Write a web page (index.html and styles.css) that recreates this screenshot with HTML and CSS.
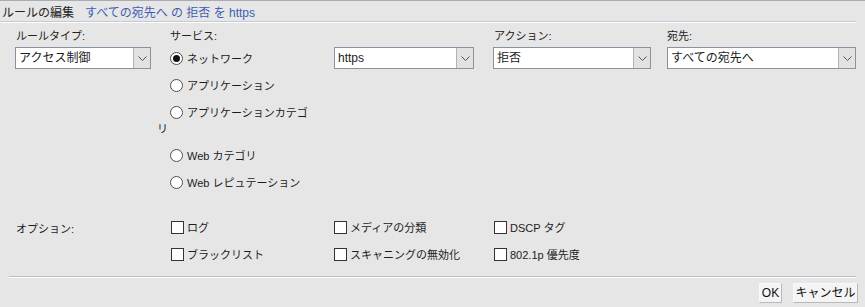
FILE: index.html
```html
<!DOCTYPE html>
<html lang="ja">
<head>
<meta charset="utf-8">
<title>ルールの編集</title>
<link rel="stylesheet" href="styles.css">
</head>
<body>
<div class="dialog">
  <div class="header">
    <span class="title">ルールの編集</span>
    <a class="summary">すべての宛先へ の 拒否 を https</a>
  </div>
  <div class="form">
    <div class="grid">
      <div class="lbl c1">ルールタイプ:</div>
      <div class="lbl c2">サービス:</div>
      <div class="lbl c3"></div>
      <div class="lbl c4">アクション:</div>
      <div class="lbl c5">宛先:</div>

      <div class="cell">
        <div class="select w1"><span class="val">アクセス制御</span><span class="btn"><svg width="9" height="5" viewBox="0 0 9 5"><polyline points="0.5,0.5 4.5,4.5 8.5,0.5" fill="none" stroke="#555" stroke-width="1"/></svg></span></div>
      </div>
      <div class="cell radios">
        <div class="item"><span class="radio checked"></span>ネットワーク</div>
        <div class="item"><span class="radio"></span>アプリケーション</div>
        <div class="item"><span class="radio"></span>アプリケーションカテゴリ</div>
        <div class="item"><span class="radio"></span>Web カテゴリ</div>
        <div class="item"><span class="radio"></span>Web レピュテーション</div>
      </div>
      <div class="cell">
        <div class="select w3"><span class="val">https</span><span class="btn"><svg width="9" height="5" viewBox="0 0 9 5"><polyline points="0.5,0.5 4.5,4.5 8.5,0.5" fill="none" stroke="#555" stroke-width="1"/></svg></span></div>
      </div>
      <div class="cell">
        <div class="select w4"><span class="val">拒否</span><span class="btn"><svg width="9" height="5" viewBox="0 0 9 5"><polyline points="0.5,0.5 4.5,4.5 8.5,0.5" fill="none" stroke="#555" stroke-width="1"/></svg></span></div>
      </div>
      <div class="cell">
        <div class="select w5"><span class="val">すべての宛先へ</span><span class="btn"><svg width="9" height="5" viewBox="0 0 9 5"><polyline points="0.5,0.5 4.5,4.5 8.5,0.5" fill="none" stroke="#555" stroke-width="1"/></svg></span></div>
      </div>
    </div>

    <div class="grid options">
      <div class="optlbl">オプション:</div>
      <div class="checks c2">
        <div class="item"><span class="check"></span>ログ</div>
        <div class="item"><span class="check"></span>ブラックリスト</div>
      </div>
      <div class="checks c3">
        <div class="item"><span class="check"></span>メディアの分類</div>
        <div class="item"><span class="check"></span>スキャニングの無効化</div>
      </div>
      <div class="checks c4">
        <div class="item"><span class="check"></span>DSCP タグ</div>
        <div class="item"><span class="check"></span>802.1p 優先度</div>
      </div>
      <div></div>
    </div>
  </div>
  <div class="rule"></div>
  <div class="buttons">
    <button class="button ok">OK</button>
    <button class="button cancel">キャンセル</button>
  </div>
</div>
</body>
</html>
```

FILE: styles.css
```css
html, body {
  margin: 0;
  padding: 0;
}
body {
  background: #e6e6e6;
  font-family: "Liberation Sans", "Noto Sans CJK JP", sans-serif;
  color: #1c1c1c;
  width: 865px;
  height: 307px;
  overflow: hidden;
}
.dialog {
  border-top: 1px solid #a9adb3;
  height: 306px;
}
.header {
  height: 20px;
  width: 854px;
  padding-left: 2px;
  display: flex;
  align-items: center;
  border-bottom: 1px solid #c2cbd5;
  box-shadow: 0 1px 0 #ffffff;
  font-size: 12px;
}
.title {
  color: #222;
}
.summary {
  margin-left: 11px;
  color: #3d5db4;
  text-decoration: none;
}
.form {
  padding: 7px 0 0 15px;
}
.grid {
  display: grid;
  grid-template-columns: 142px 177px 159px 174px 189px;
  row-gap: 4px;
}
.lbl {
  font-size: 11px;
  line-height: 14px;
  height: 14px;
  color: #222;
}
.lbl.c1 { padding-left: 1px; }
.lbl.c2 { padding-left: 13px; }
.lbl.c4 { padding-left: 1px; }

.select {
  box-sizing: border-box;
  height: 22px;
  border: 1px solid #8793a0;
  background: #fff;
  display: flex;
  font-size: 12px;
}
.select .val {
  flex: 1;
  padding-left: 3px;
  line-height: 20px;
  white-space: nowrap;
  overflow: hidden;
}
.select .btn {
  width: 16px;
  background: #e2e2e2;
  border-left: 1px solid #b3b3b3;
  display: flex;
  align-items: center;
  justify-content: center;
}
.w1 { width: 136px; }
.w3 { width: 140px; }
.w4 { width: 158px; }
.w5 { width: 189px; }

.radios {
  width: 152px;
  padding-top: 4px;
  display: flex;
  flex-direction: column;
  gap: 11px;
  font-size: 11px;
  line-height: 16px;
}
.radios .item {
  text-indent: 13px;
}
.radio {
  display: inline-block;
  box-sizing: border-box;
  width: 13px;
  height: 13px;
  border: 1px solid #4e4e4e;
  border-radius: 50%;
  background: #fff;
  vertical-align: -2px;
  margin-right: 4px;
  text-indent: 0;
  position: relative;
}
.radio.checked::after {
  content: "";
  position: absolute;
  left: 2px;
  top: 2px;
  width: 7px;
  height: 7px;
  border-radius: 50%;
  background: #111;
}

.options {
  margin-top: 29px;
}
.optlbl {
  padding-left: 1px;
  padding-top: 1px;
  font-size: 11px;
  line-height: 16px;
}
.checks {
  display: flex;
  flex-direction: column;
  gap: 11px;
  font-size: 11px;
  line-height: 16px;
}
.checks.c2 { padding-left: 14px; }
.checks.c4 { padding-left: 1px; }
.check {
  display: inline-block;
  box-sizing: border-box;
  width: 13px;
  height: 13px;
  border: 1px solid #333;
  background: #fff;
  vertical-align: -2px;
  margin-right: 3px;
}

.rule {
  margin: 13px 9px 0 9px;
  height: 0;
  border-top: 1px solid #b4c0cf;
  box-shadow: 0 1px 0 #ffffff;
}
.buttons {
  display: flex;
  justify-content: flex-end;
  gap: 11px;
  padding-top: 6px;
  padding-right: 7px;
}
.button {
  height: 20px;
  box-sizing: border-box;
  padding: 0;
  white-space: nowrap;
  font-family: "Liberation Sans", "Noto Sans CJK JP", sans-serif;
  font-size: 12px;
  color: #111;
  background: #f4f4f4;
  border: 1px solid;
  border-color: #f9f9f9 #b9b9b9 #b9b9b9 #f9f9f9;
  line-height: 18px;
}
.ok { width: 23px; }
.cancel { width: 65px; }
```
